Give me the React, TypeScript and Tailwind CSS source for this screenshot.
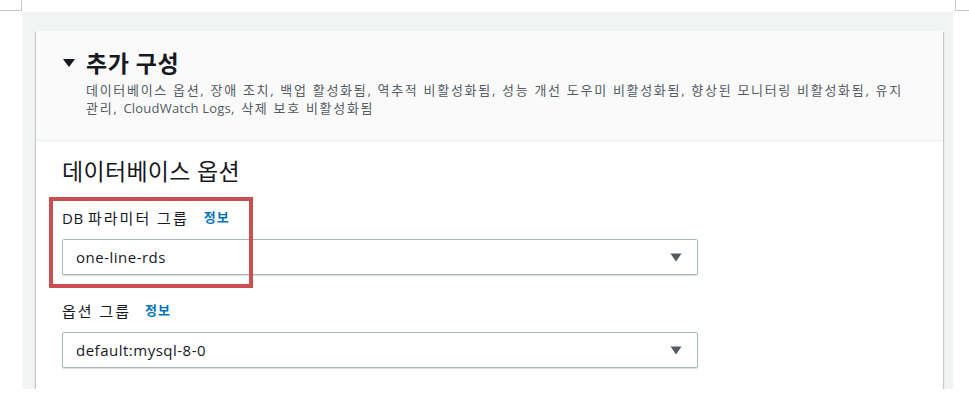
import React from "react";

const font = { fontFamily: '"Open Sans", "Noto Sans CJK KR", sans-serif' };

function Caret() {
  return (
    <svg width="12" height="9" viewBox="0 0 12 9" className="shrink-0">
      <path d="M0.5 0.5 L11.5 0.5 L6 8.5 Z" fill="#545b64" />
    </svg>
  );
}

function Select({ value }: { value: string }) {
  return (
    <div className="w-[636px] h-[36px] border border-[#aab7b8] rounded-[2px] bg-white flex items-center justify-between pl-[13px] pr-[15px] shadow-[0_1px_1px_rgba(0,28,36,0.15)]">
      <span className="text-[15px] tracking-[0.5px] text-[#16191f]">{value}</span>
      <Caret />
    </div>
  );
}

function Label({ latin, text, gap }: { latin?: string; text: string; gap: string }) {
  return (
    <div className={`flex items-center h-[22px] ${gap}`}>
      <span className="text-[15px] text-[#16191f]">
        {latin ? <span className="tracking-[0.5px]">{latin} </span> : null}
        <span className="tracking-[2px]">{text}</span>
      </span>
      <span className="text-[13px] tracking-[1px] font-bold text-[#0073bb]">정보</span>
    </div>
  );
}

export default function App() {
  return (
    <div className="w-[969px] h-[416px] bg-white overflow-hidden" style={font}>
      <div className="flex h-[11px]">
        <div className="w-[22px] h-[11px] border-r border-b border-[#c8c8c8]" />
        <div className="flex-1" />
        <div className="w-[14px] h-[11px] border-l border-b border-[#c8c8c8]" />
      </div>
      <div className="ml-[22px] mr-[16px] h-[378px] bg-[#f2f3f3] border-t border-l border-[#fbfbfb] pt-[19px] pl-[13px] pr-[10px] overflow-hidden">
        <div className="bg-white h-[400px] shadow-[0_1px_1px_0_rgba(0,28,36,0.3),1px_1px_1px_0_rgba(0,28,36,0.15),-1px_1px_1px_0_rgba(0,28,36,0.15)]">
          <div className="h-[110px] bg-[#fafafa] border-b border-[#eaeded] pl-[26px] pr-[10px] pt-[17px]">
            <div className="flex items-center gap-[10px]">
              <svg width="14" height="10" viewBox="0 0 14 10">
                <path d="M1 1 L13 1 L7 9 Z" fill="#16191f" />
              </svg>
              <span className="text-[23px] font-bold tracking-[0.5px] text-[#16191f] leading-[30px]">추가 구성</span>
            </div>
            <div className="pl-[24px] text-[13px] tracking-[1.7px] leading-[18px] text-[#545b64] mt-[3px] whitespace-nowrap">
              데이터베이스 옵션, 장애 조치, 백업 활성화됨, 역추적 비활성화됨, 성능 개선 도우미 비활성화됨, 향상된 모니터링 비활성화됨, 유지
              <br />
              관리, <span className="tracking-[0.2px]">CloudWatch Logs</span>, 삭제 보호 비활성화됨
            </div>
          </div>
          <div className="pl-[13px] pt-[15px]">
            <div className="pl-[13px] text-[23px] tracking-[0.3px] leading-[30px] text-[#16191f]">데이터베이스 옵션</div>
            <div className="mt-[11px] relative">
              <div className="absolute left-0 top-0 w-[204px] h-[91px] border-[4px] border-[#c9504f] pointer-events-none" />
              <div className="pl-[13px] pt-[10px]">
                <Label latin="DB" text="파라미터 그룹" gap="gap-[15px]" />
                <div className="mt-[10px]">
                  <Select value="one-line-rds" />
                </div>
              </div>
            </div>
            <div className="pl-[13px] mt-[25px]">
              <Label text="옵션 그룹" gap="gap-[14px]" />
              <div className="mt-[10px]">
                <Select value="default:mysql-8-0" />
              </div>
            </div>
          </div>
        </div>
      </div>
    </div>
  );
}
